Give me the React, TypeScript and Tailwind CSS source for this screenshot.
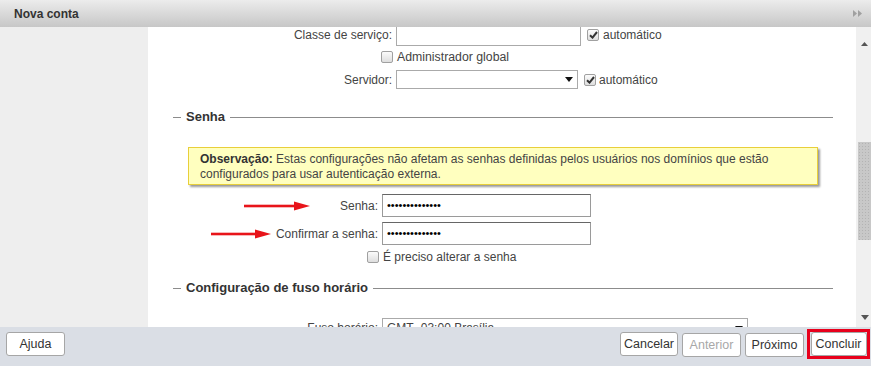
import React from "react";

const font = { fontFamily: '"Liberation Sans", Arial, sans-serif' };

function Box({ checked }: { checked?: boolean }) {
  return (
    <span className="w-[12px] h-[12px] shrink-0 rounded-[2px] border border-[#a0a0a0] bg-linear-to-b from-[#fbfbfb] to-[#dedede] flex items-center justify-center">
      {checked && (
        <svg width="9" height="8" viewBox="0 0 9 8">
          <path d="M1 4.2 L3.5 6.6 L8 1" fill="none" stroke="#333" strokeWidth="2" />
        </svg>
      )}
    </span>
  );
}

function Arrow({ width }: { width: number }) {
  return (
    <svg width={width} height="10" viewBox={`0 0 ${width} 10`}>
      <rect x="0" y="3.7" width={width - 14} height="2.6" fill="#e8141a" />
      <polygon points={`${width - 16},0.5 ${width},5 ${width - 16},9.5`} fill="#e8141a" />
    </svg>
  );
}

function Legend({ title }: { title: string }) {
  return (
    <div className="flex items-center h-[16px] ml-[25px] mr-[23px]">
      <div className="w-[8px] h-px bg-[#8c8c8c]" />
      <span className="px-[5px] text-[13px] font-bold text-[#333]">{title}</span>
      <div className="flex-1 h-px bg-[#8c8c8c]" />
    </div>
  );
}

function DownTri({ color = "#111" }: { color?: string }) {
  return (
    <svg width="8" height="5" viewBox="0 0 8 5">
      <polygon points="0,0 8,0 4,5" fill={color} />
    </svg>
  );
}

function Btn({ label, w, disabled }: { label: string; w: string; disabled?: boolean }) {
  return (
    <button
      className={`${w} h-[24px] bg-white border border-[#a6a6a6] rounded-[3px] text-[12.5px] ${
        disabled ? "text-[#a8a8a8]" : "text-[#333]"
      }`}
    >
      {label}
    </button>
  );
}

export default function App() {
  return (
    <div style={font} className="w-[871px] h-[366px] flex flex-col bg-white overflow-hidden">
      {/* header */}
      <div className="h-[27px] shrink-0 flex items-center justify-between pl-[14px] pr-[9px] bg-linear-to-b from-[#ececec] to-[#c7c7c7]">
        <span className="text-[12px] font-bold text-[#333]">Nova conta</span>
        <svg width="9" height="7" viewBox="0 0 9 7">
          <polygon points="0,0 4,3.5 0,7" fill="#a0a0a0" />
          <polygon points="5,0 9,3.5 5,7" fill="#a0a0a0" />
        </svg>
      </div>

      <div className="flex-1 flex min-h-0">
        <div className="w-[148px] shrink-0 bg-[#eeeeee]" />

        {/* form */}
        <div className="flex-1 overflow-hidden text-[12px] text-[#444]">
          <div className="flex items-center h-[22px] -mt-[3px]">
            <span className="w-[245px] text-right pr-[1px]">Classe de serviço:</span>
            <div className="ml-[3px] w-[185px] h-[22px] border border-[#aaa] bg-white" />
            <span className="ml-[6px]"><Box checked /></span>
            <span className="ml-[4px]">automático</span>
          </div>
          <div className="flex items-center h-[16px] mt-[3px]">
            <span className="w-[245px] flex justify-end"><Box /></span>
            <span className="ml-[4px] text-[12.3px]">Administrador global</span>
          </div>
          <div className="flex items-center h-[19px] mt-[5px]">
            <span className="w-[245px] text-right pr-[1px]">Servidor:</span>
            <div className="ml-[3px] w-[182px] h-[19px] border border-[#aaa] bg-white flex items-center justify-end pr-[4px]">
              <DownTri />
            </div>
            <span className="ml-[6px]"><Box checked /></span>
            <span className="ml-[3px]">automático</span>
          </div>

          <div className="mt-[20px]">
            <Legend title="Senha" />
          </div>

          <div className="mt-[22px] ml-[40px] w-[630px] h-[38px] bg-[#ffffbf] border border-[#e8cf3a] shadow-[2px_2px_2px_#9a9a9a] px-[11px] pt-[4px] text-[12px] leading-[15px] text-[#444]">
            <b className="text-[#333]">Observação:</b> Estas configurações não afetam as senhas definidas pelos usuários nos domínios que estão configurados para usar autenticação externa.
          </div>

          <div className="flex items-center h-[23px] mt-[9px]">
            <span className="w-[231px] flex items-center justify-end pr-[1px]">
              <span className="mr-[30px]"><Arrow width={66} /></span>
              Senha:
            </span>
            <div className="ml-[3px] w-[209px] h-[23px] border border-[#9a9a9a] border-t-[#666] bg-white flex items-center pl-[4px] text-[11px] text-black">
              ••••••••••••••
            </div>
          </div>
          <div className="flex items-center h-[23px] mt-[5px]">
            <span className="w-[231px] flex items-center justify-end pr-[1px]">
              <span className="mr-[5px]"><Arrow width={60} /></span>
              Confirmar a senha:
            </span>
            <div className="ml-[3px] w-[209px] h-[23px] border border-[#9a9a9a] border-t-[#666] bg-white flex items-center pl-[4px] text-[11px] text-black">
              ••••••••••••••
            </div>
          </div>
          <div className="flex items-center h-[16px] mt-[4px]">
            <span className="w-[231px] flex justify-end"><Box /></span>
            <span className="ml-[4px]">É preciso alterar a senha</span>
          </div>

          <div className="mt-[15px]">
            <Legend title="Configuração de fuso horário" />
          </div>

          <div className="flex items-start h-[20px] mt-[22px]">
            <span className="w-[231px] text-right pr-[1px] pt-[1px]">Fuso horário:</span>
            <div className="ml-[3px] w-[366px] h-[20px] border border-[#aaa] bg-white flex items-center justify-between pl-[4px] pr-[4px]">
              <span>GMT -03:00 Brasília</span>
              <DownTri />
            </div>
          </div>
        </div>

        {/* scrollbar */}
        <div className="w-[15px] shrink-0 bg-[#f0f0f0] flex flex-col items-center">
          <div className="h-[19px] flex items-end justify-center pl-[2px]">
            <svg width="7" height="4" viewBox="0 0 7 4">
              <polygon points="0,4 7,4 3.5,0" fill="#555" />
            </svg>
          </div>
          <div className="mt-[96px] ml-[2px] w-[13px] h-[98px] bg-[#c8c8c8] bg-[radial-gradient(#b3b3b3_0.6px,transparent_0.8px)] bg-size-[3px_3px]" />
          <div className="flex-1 flex items-end justify-center pb-[7px] pl-[2px]">
            <DownTri color="#555" />
          </div>
        </div>
      </div>

      {/* footer */}
      <div className="h-[39px] shrink-0 bg-[#dadee5] flex items-start pt-[5px] pl-[6px] pr-[1px]">
        <button className="w-[59px] h-[24px] bg-white border border-[#a6a6a6] rounded-[3px] text-[12.5px] text-[#333]">
          Ajuda
        </button>
        <div className="ml-auto flex items-start">
          <Btn label="Cancelar" w="w-[58px]" />
          <span className="ml-[4px]"><Btn label="Anterior" w="w-[59px]" disabled /></span>
          <span className="ml-[4px]"><Btn label="Próximo" w="w-[59px]" /></span>
          <div className="ml-[3px] -mt-[3px] border-[3px] border-[#e8001c] px-[0.5px] flex">
            <Btn label="Concluir" w="w-[56px]" />
          </div>
        </div>
      </div>
    </div>
  );
}
